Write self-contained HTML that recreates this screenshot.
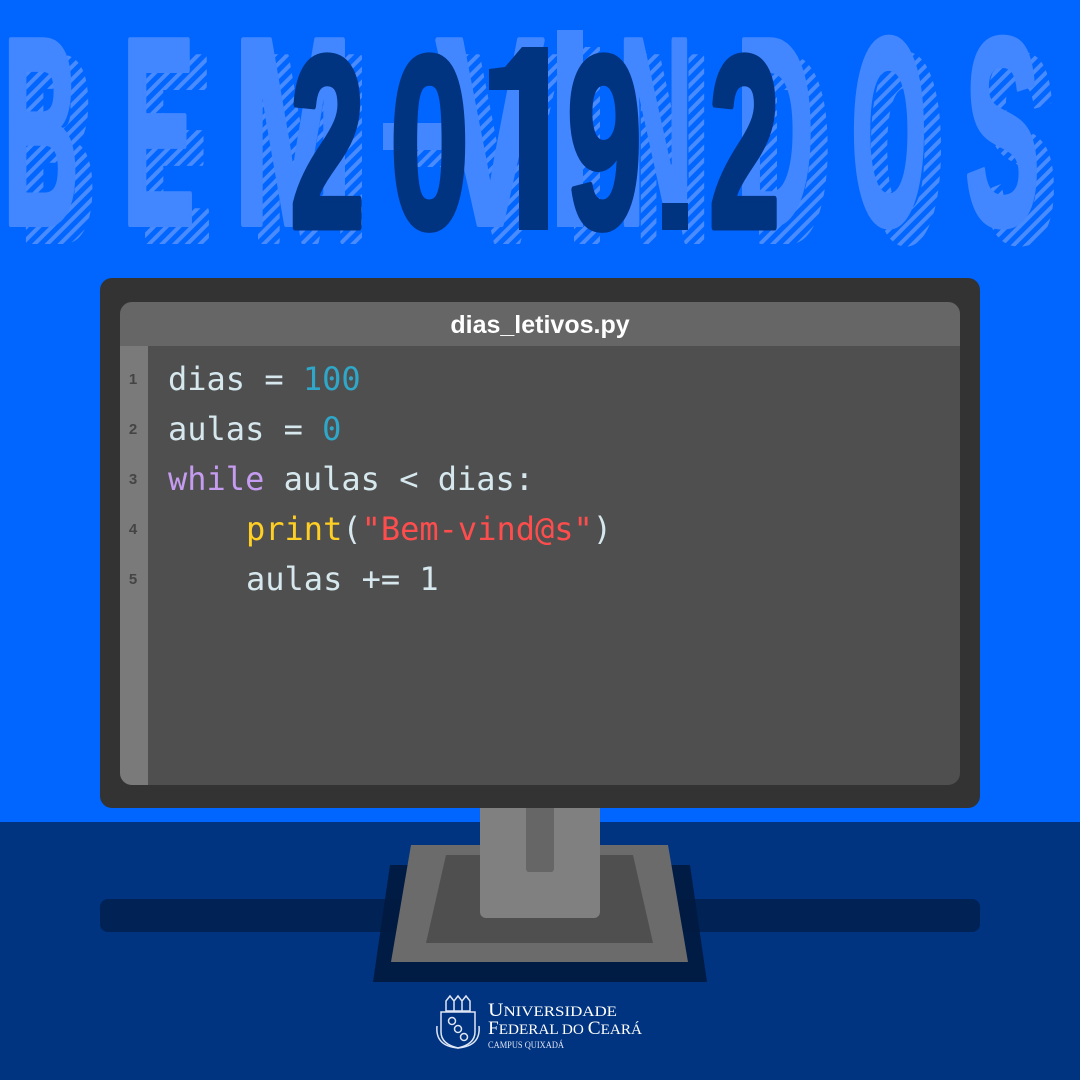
<!DOCTYPE html>
<html><head><meta charset="utf-8"><style>
html,body{margin:0;padding:0;width:1080px;height:1080px;overflow:hidden;background:#0066ff}
</style></head><body>
<svg width="1080" height="1080" viewBox="0 0 1080 1080" xmlns="http://www.w3.org/2000/svg">
<defs>
<pattern id="h" width="9" height="9" patternUnits="userSpaceOnUse" patternTransform="rotate(45)">
<rect width="9" height="9" fill="#0066ff"/><rect width="4" height="9" fill="#4a8cff"/>
</pattern>
<g id="bem">
<text x="3" y="224" textLength="76" lengthAdjust="spacingAndGlyphs">B</text>
<text x="122" y="224" textLength="73" lengthAdjust="spacingAndGlyphs">E</text>
<text x="233" y="224" textLength="120" lengthAdjust="spacingAndGlyphs">M</text>
<rect x="383" y="123" width="59" height="27" stroke="none"/>
<text x="436" y="224" textLength="108" lengthAdjust="spacingAndGlyphs">V</text>
<rect x="557" y="30" width="26" height="197" stroke="none"/>
<text x="618" y="224" textLength="75" lengthAdjust="spacingAndGlyphs">N</text>
<text x="736" y="224" textLength="78" lengthAdjust="spacingAndGlyphs">D</text>
<text x="851" y="224" textLength="76" lengthAdjust="spacingAndGlyphs">O</text>
<text x="965" y="224" textLength="75" lengthAdjust="spacingAndGlyphs">S</text>
</g>
</defs>
<rect width="1080" height="822" fill="#0066ff"/>
<rect y="822" width="1080" height="258" fill="#003380"/>
<g font-family="Liberation Sans, sans-serif" font-weight="bold" font-size="267" fill="url(#h)" stroke="url(#h)" stroke-width="6" stroke-linejoin="round" transform="translate(17,17)">
<use href="#bem"/>
</g>
<g font-family="Liberation Sans, sans-serif" font-weight="bold" font-size="267" fill="#4287ff" stroke="#4287ff" stroke-width="6" stroke-linejoin="round">
<use href="#bem"/>
</g>
<!-- 2019.2 -->
<g font-family="Liberation Sans, sans-serif" font-weight="bold" font-size="245" fill="#003380" stroke="#003380" stroke-width="7" stroke-linejoin="round">
<text x="290" y="227" textLength="75" lengthAdjust="spacingAndGlyphs">2</text>
<text x="390" y="227" textLength="79" lengthAdjust="spacingAndGlyphs">0</text>
<polygon points="489,90 489,69 505,67 522,47 548,47 548,230 519,230 519,90" stroke="none"/>
<text x="567" y="227" textLength="75" lengthAdjust="spacingAndGlyphs">9</text>
<rect x="662" y="203" width="26" height="27" stroke="none"/>
<text x="709" y="227" textLength="71" lengthAdjust="spacingAndGlyphs">2</text>
</g>
<!-- stand shadow & bar -->
<rect x="100" y="899" width="880" height="33" rx="8" fill="#002255"/>
<polygon points="390,865 690,865 707,982 373,982" fill="#001a40" opacity="0.92"/>
<polygon points="411,845 668,845 688,962 391,962" fill="#6b6b6b"/>
<polygon points="446,855 633,855 653,943 426,943" fill="#4f4f4f"/>
<rect x="480" y="790" width="120" height="128" rx="6" fill="#808080"/>
<rect x="526" y="800" width="28" height="72" rx="3" fill="#666"/>
<!-- monitor -->
<rect x="100" y="278" width="880" height="530" rx="12" fill="#333"/>
<rect x="120" y="302" width="840" height="483" rx="12" fill="#4f4f4f"/>
<path d="M132 302 H948 A12 12 0 0 1 960 314 V346 H120 V314 A12 12 0 0 1 132 302Z" fill="#666"/>
<path d="M120 346 H148 V785 H132 A12 12 0 0 1 120 773Z" fill="#7a7a7a"/>
<text x="540" y="333" text-anchor="middle" font-family="Liberation Sans, sans-serif" font-weight="bold" font-size="25" fill="#fff">dias_letivos.py</text>
<g font-family="Liberation Sans, sans-serif" font-weight="bold" font-size="15" fill="#444" text-anchor="middle">
<text x="133" y="384">1</text><text x="133" y="434">2</text><text x="133" y="484">3</text><text x="133" y="534">4</text><text x="133" y="584">5</text>
</g>
<g font-family="DejaVu Sans Mono, Liberation Mono, monospace" font-size="32" fill="#d6e8ee">
<text x="168" y="390">dias = <tspan fill="#2fa7c9">100</tspan></text>
<text x="168" y="440">aulas = <tspan fill="#2fa7c9">0</tspan></text>
<text x="168" y="490"><tspan fill="#c59cf0">while</tspan> aulas &lt; dias:</text>
<text x="246" y="540"><tspan fill="#ffcf24">print</tspan>(<tspan fill="#ff4d4d">"Bem-vind@s"</tspan>)</text>
<text x="246" y="590">aulas += 1</text>
</g>
<!-- logo -->
<g stroke="#dfe6f5" fill="none" stroke-width="1.5">
<path d="M441 1012 h34 v20 q0 12 -17 16 q-17 -4 -17 -16z"/>
<circle cx="452" cy="1021" r="3.5"/><circle cx="458" cy="1029" r="3.5"/><circle cx="464" cy="1037" r="3.5"/>
<path d="M446 1001 l4 -5 4 5 v10 h-8z M454 1001 l4 -5 4 5 v10 h-8z M462 1001 l4 -5 4 5 v10 h-8z"/>
<path d="M437 1026 q-2 20 21 22 q23 -2 21 -22"/>
</g>
<g font-family="Liberation Serif, serif" fill="#fff">
<text x="488" y="1016" font-size="19" textLength="129" lengthAdjust="spacingAndGlyphs">U<tspan font-size="15">NIVERSIDADE</tspan></text>
<text x="488" y="1034" font-size="19" textLength="154" lengthAdjust="spacingAndGlyphs">F<tspan font-size="15">EDERAL DO </tspan>C<tspan font-size="15">EARÁ</tspan></text>
<text x="488" y="1048" font-size="9" fill="#dfe6f5" textLength="76" lengthAdjust="spacingAndGlyphs">CAMPUS QUIXADÁ</text>
</g>
</svg>
</body></html>
